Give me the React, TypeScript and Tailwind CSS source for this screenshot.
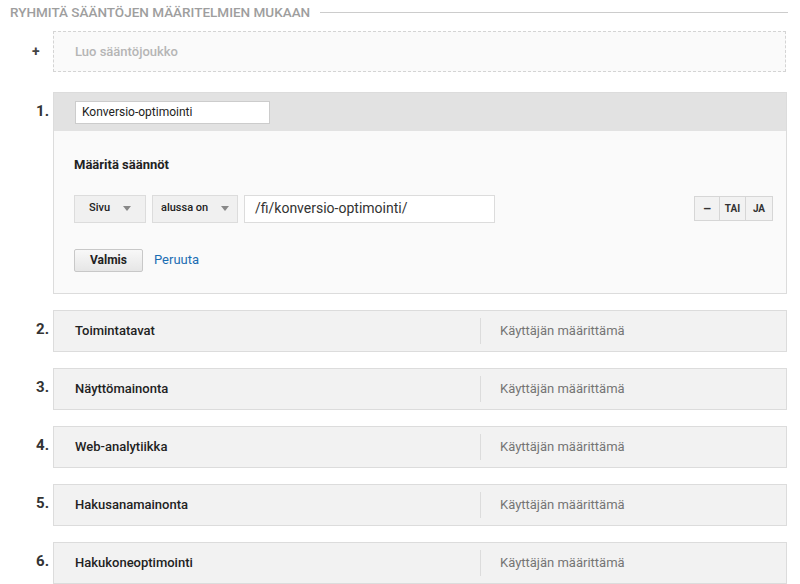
export default function App() {
  const rows = [
    ["2.", "Toimintatavat"],
    ["3.", "Näyttömainonta"],
    ["4.", "Web-analytiikka"],
    ["5.", "Hakusanamainonta"],
    ["6.", "Hakukoneoptimointi"],
  ];
  const caret = (
    <svg width="8" height="5" viewBox="0 0 8 5"><path d="M0 0h8L4 5z" fill="#888" /></svg>
  );
  return (
    <div className="w-[800px] h-[584px] bg-white overflow-hidden text-[#222]" style={{ fontFamily: "Roboto, 'Liberation Sans', sans-serif" }}>
      <div className="flex items-center pl-[10px] pr-[12px] pt-[4px] h-[20px]">
        <span className="text-[13.5px] font-medium text-[#9e9e9e] whitespace-nowrap">RYHMITÄ SÄÄNTÖJEN MÄÄRITELMIEN MUKAAN</span>
        <div className="flex-1 h-px bg-[#ccc] ml-[10px]" />
      </div>
      <div className="flex items-center mt-[11px]">
        <div className="w-[53px] pl-[32px] text-[14px] font-bold text-[#444]">+</div>
        <div className="w-[733px] h-[41px] border border-dashed border-[#d4d4d4] bg-[#fafafa] flex items-center pl-[21px] text-[13px] font-medium text-[#b5b5b5]">Luo sääntöjoukko</div>
      </div>
      <div className="flex mt-[20px]">
        <div className="w-[53px] text-right pr-[4px] pt-[8px] text-[15px] font-bold text-[#333]">1.</div>
        <div className="w-[734px] border border-[#dcdcdc]">
          <div className="h-[38px] bg-[#e2e2e2] flex items-center pl-[21px]">
            <div className="w-[195px] h-[23px] bg-white border border-[#ccc] flex items-center px-[6px] text-[12px]">Konversio-optimointi</div>
          </div>
          <div className="bg-[#fafafa] h-[162px] pl-[20px] pr-[13px] pt-[24px]">
            <div className="text-[13px] font-bold">Määritä säännöt</div>
            <div className="flex items-center mt-[20px]">
              <div className="w-[72px] h-[28px] bg-[#f0f0f0] border border-[#dcdcdc] flex items-center pl-[14px] gap-[13px] text-[11px] font-medium">Sivu {caret}</div>
              <div className="w-[86px] h-[28px] ml-[6px] bg-[#f0f0f0] border border-[#dcdcdc] flex items-center pl-[8px] gap-[13px] text-[11px] font-medium">alussa on {caret}</div>
              <div className="w-[251px] h-[28px] ml-[6px] bg-white border border-[#dcdcdc] flex items-center pl-[10px] text-[14px] text-[#333]">/fi/konversio-optimointi/</div>
              <div className="ml-auto flex h-[25px] border border-[#d6d6d6] bg-[#f2f2f2] text-[10px] font-bold text-[#333]">
                <div className="w-[25px] flex items-center justify-center border-r border-[#d6d6d6] text-[13px]">–</div>
                <div className="w-[26px] flex items-center justify-center border-r border-[#d6d6d6]">TAI</div>
                <div className="w-[26px] flex items-center justify-center">JA</div>
              </div>
            </div>
            <div className="flex items-center mt-[26px]">
              <div className="w-[69px] h-[23px] bg-gradient-to-b from-[#f8f8f8] to-[#e6e6e6] border border-[#c8c8c8] rounded-[2px] flex items-center justify-center text-[12px] font-bold">Valmis</div>
              <span className="ml-[11px] text-[13px] text-[#1a6db3]">Peruuta</span>
            </div>
          </div>
        </div>
      </div>
      <div className="flex flex-col gap-[16px] mt-[16px]">
        {rows.map(([n, t]) => (
          <div key={n} className="flex">
            <div className="w-[53px] text-right pr-[4px] pt-[8px] text-[15px] font-bold text-[#333]">{n}</div>
            <div className="w-[734px] h-[42px] bg-[#f2f2f2] border border-[#dcdcdc] flex items-center">
              <div className="w-[426px] pl-[21px] text-[13px] font-medium">{t}</div>
              <div className="w-px h-[26px] bg-[#dcdcdc]" />
              <div className="pl-[19px] text-[13px] text-[#757575]">Käyttäjän määrittämä</div>
            </div>
          </div>
        ))}
      </div>
    </div>
  );
}
